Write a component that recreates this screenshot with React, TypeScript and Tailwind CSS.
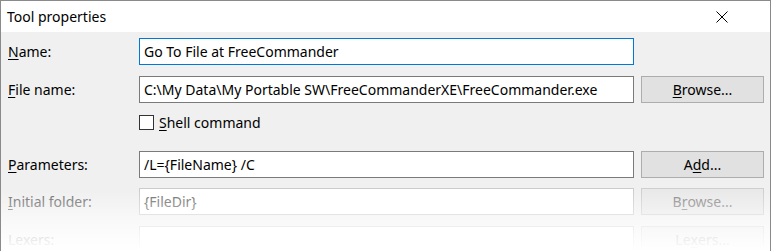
import React from "react";

const font = { fontFamily: '"Segoe UI", "Noto Sans", "Open Sans", sans-serif' };

function U({ children }: { children: React.ReactNode }) {
  return <span className="underline underline-offset-[2px] decoration-1">{children}</span>;
}

function Field({
  value,
  focused,
  disabled,
}: {
  value: string;
  focused?: boolean;
  disabled?: boolean;
}) {
  const border = focused
    ? "border-[#0078d7]"
    : disabled
      ? "border-[#cccccc] text-[#6d6d6d]"
      : "border-[#7a7a7a] text-black";
  return (
    <div
      className={`w-[495px] h-[27px] shrink-0 bg-white border ${border} flex items-center pl-[4px] whitespace-nowrap overflow-hidden`}
    >
      {value}
    </div>
  );
}

function Button({
  children,
  disabled,
}: {
  children: React.ReactNode;
  disabled?: boolean;
}) {
  return (
    <div
      className={`ml-[7px] w-[123px] h-[27px] shrink-0 border flex items-center justify-center ${
        disabled
          ? "bg-[#e9e9e9] border-[#cfcfcf] text-[#8a8a8a]"
          : "bg-[#e1e1e1] border-[#adadad] text-black"
      }`}
    >
      {children}
    </div>
  );
}

function Row({
  label,
  disabled,
  className,
  children,
}: {
  label: React.ReactNode;
  disabled?: boolean;
  className?: string;
  children: React.ReactNode;
}) {
  return (
    <div className={`flex items-center ${className ?? ""}`}>
      <div
        className={`w-[138px] shrink-0 pl-[7px] ${disabled ? "text-[#6d6d6d]" : "text-black"}`}
      >
        {label}
      </div>
      {children}
    </div>
  );
}

export default function App() {
  return (
    <div
      className="relative w-[771px] h-[251px] overflow-hidden bg-[#f0f0f0] border-t border-l border-r border-[#8a8a8a] text-[14px] leading-none"
      style={font}
    >
      {/* title bar */}
      <div className="h-[31px] bg-white flex items-center justify-between pl-[6px] pr-[42px]">
        <span className="text-[14px] text-black">Tool properties</span>
        <svg width="12" height="12" viewBox="0 0 12 12" className="text-black">
          <path d="M0.5 0.5 L11.5 11.5 M11.5 0.5 L0.5 11.5" stroke="currentColor" strokeWidth="1" />
        </svg>
      </div>

      <Row label={<><U>N</U>ame:</>} className="mt-[6px]">
        <Field value="Go To File at FreeCommander" focused />
      </Row>

      <Row label={<><U>F</U>ile name:</>} className="mt-[11px]">
        <Field value="C:\My Data\My Portable SW\FreeCommanderXE\FreeCommander.exe" />
        <Button>
          <U>B</U>rowse...
        </Button>
      </Row>

      <div className="flex items-center mt-[12px] pl-[138px]">
        <div className="w-[15px] h-[15px] border border-[#333333] bg-white" />
        <span className="ml-[5px] text-black">
          <U>S</U>hell command
        </span>
      </div>

      <Row label={<><U>P</U>arameters:</>} className="mt-[21px]">
        <Field value="/L={FileName} /C" />
        <Button>
          A<U>d</U>d...
        </Button>
      </Row>

      <Row label={<><U>I</U>nitial folder:</>} disabled className="mt-[10px]">
        <Field value="{FileDir}" disabled />
        <Button disabled>
          B<U>r</U>owse...
        </Button>
      </Row>

      <Row label="Lexers:" disabled className="mt-[11px]">
        <Field value="" disabled />
        <Button disabled>
          Le<U>x</U>ers...
        </Button>
      </Row>

      {/* bottom fade */}
      <div className="pointer-events-none absolute left-[-1px] right-[-1px] bottom-0 h-[60px] bg-gradient-to-b from-white/0 via-white/60 to-white" />
    </div>
  );
}
